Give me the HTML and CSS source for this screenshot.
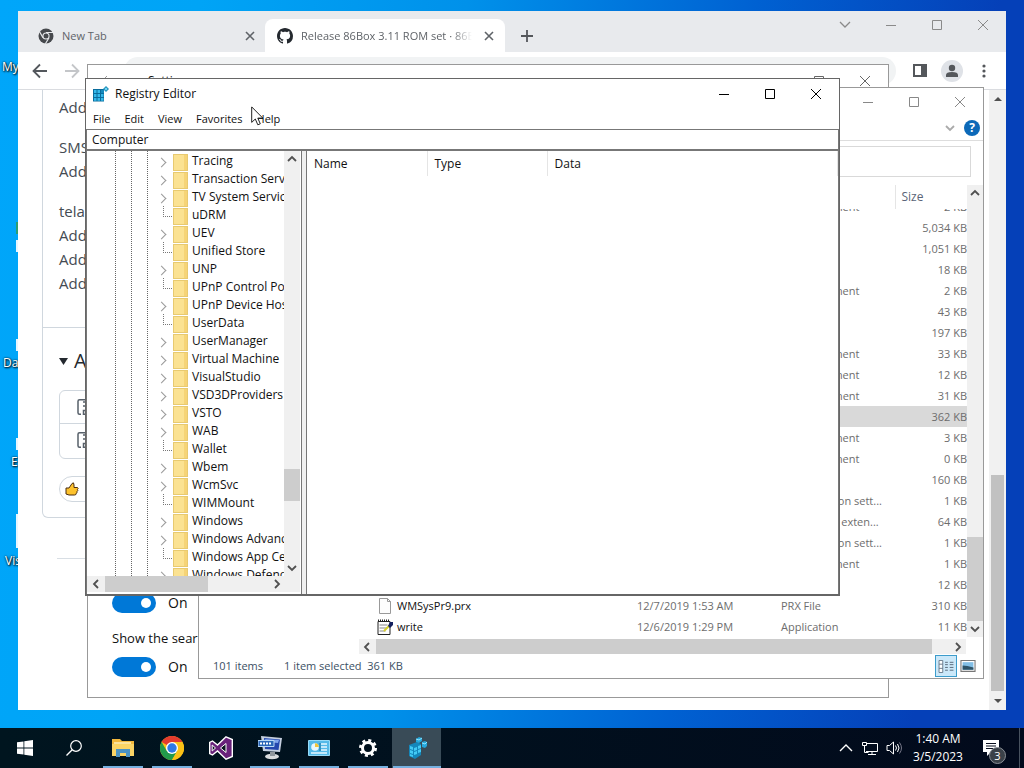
FILE: index.html
```html
<!DOCTYPE html>
<html lang="en">
<head>
<meta charset="utf-8">
<title>Desktop</title>
<link rel="stylesheet" href="styles.css">
</head>
<body>
<svg class="sprites" aria-hidden="true">
  <symbol id="i-min" viewBox="0 0 12 12"><path d="M1 6.500h10" stroke="currentColor"/></symbol>
  <symbol id="i-max" viewBox="0 0 12 12"><path d="M1.500 1.500h9v9h-9z" fill="none" stroke="currentColor"/></symbol>
  <symbol id="i-close" viewBox="0 0 12 12"><path d="M1 1l10 10M11 1L1 11" stroke="currentColor"/></symbol>
  <symbol id="i-down" viewBox="0 0 10 10"><path d="M1 3l4 4 4-4" fill="none" stroke="currentColor" stroke-width="1.800"/></symbol>
  <symbol id="i-up" viewBox="0 0 10 10"><path d="M1 7l4-4 4 4" fill="none" stroke="currentColor" stroke-width="1.800"/></symbol>
  <symbol id="i-left" viewBox="0 0 10 10"><path d="M7 1L3 5l4 4" fill="none" stroke="currentColor" stroke-width="1.800"/></symbol>
  <symbol id="i-right" viewBox="0 0 10 10"><path d="M3 1l4 4-4 4" fill="none" stroke="currentColor" stroke-width="1.800"/></symbol>
  <symbol id="i-zip" viewBox="0 0 12 16"><path d="M11 .8H2.500Q1 .8 1 2.300v11.400Q1 15.200 2.500 15.200H4M6 3h2M8 5h2M6 7h2M8 9h2M6.500 11.500h3.500v3.700H6.500z" fill="none" stroke="#57606a" stroke-width="1.500"/></symbol>
  <symbol id="i-reg" viewBox="0 0 16 16"><path d="M0 3h11v12.500H0z" fill="#0a6c9c"/><path d="M1 4h2.500v3H1zM4.500 4H7v3H4.500zM1 8h2.500v3H1zM4.500 8H7v3H4.500zM8 8h2.500v3H8zM1 12h2.500v2.700H1zM4.500 12H7v2.700H4.500zM8 12h2.500v2.700H8z" fill="#35b9ea"/><path d="M8 4h3v3H8z" fill="#1489bd"/><path d="M13 0l3 3-3 3-3-3z" fill="#1f8fba"/><path d="M13 1.500L14.500 3 13 4.500 11.500 3z" fill="#7adcf8"/></symbol>
</svg>

<main class="desktop">
  <div class="shortcuts">
    <span class="shortcut s-my">My</span>
    <span class="shortcut s-da">Da</span>
    <span class="shortcut s-e">E</span>
    <span class="shortcut s-vis">Vis</span>
    <i class="sliver v-green"></i><i class="sliver v-a"></i><i class="sliver v-b"></i><i class="sliver v-c"></i><i class="sliver v-d"></i>
  </div>

  <section class="window chrome" aria-label="Browser">
    <header class="tabstrip">
      <div class="tab">
        <svg class="favicon" viewBox="0 0 16 16"><circle cx="8" cy="8" r="7.500" fill="#46494d"/><path d="M8 4.500h7M5 9.700L1.600 3.700M11 9.700l-3.600 6" stroke="#e8eaed" stroke-width="1.200"/><circle cx="8" cy="8" r="3.600" fill="#e8eaed"/><circle cx="8" cy="8" r="2.500" fill="#46494d"/></svg>
        <span class="tab-title">New Tab</span>
        <button class="tab-close" aria-label="Close tab"><svg viewBox="0 0 12 12"><path d="M2 2l8 8M10 2l-8 8" stroke="currentColor" stroke-width="1.600"/></svg></button>
      </div>
      <div class="tab active">
        <svg class="favicon" viewBox="0 0 16 16"><path fill="#24292f" d="M8 0C3.580 0 0 3.580 0 8c0 3.540 2.290 6.530 5.470 7.590.4.070.55-.17.55-.38 0-.19-.01-.82-.01-1.490-2.010.37-2.530-.49-2.690-.94-.09-.23-.48-.94-.82-1.130-.28-.15-.68-.52-.01-.53.63-.01 1.080.58 1.230.82.72 1.210 1.870.87 2.330.66.070-.52.28-.87.51-1.070-1.780-.2-3.640-.89-3.640-3.950 0-.87.31-1.590.82-2.150-.08-.2-.36-1.020.08-2.120 0 0 .67-.21 2.200.82.64-.18 1.320-.27 2-.27s1.360.09 2 .27c1.530-1.040 2.200-.82 2.200-.82.44 1.100.16 1.920.08 2.120.51.56.82 1.270.82 2.150 0 3.070-1.870 3.750-3.650 3.950.29.25.54.73.54 1.480 0 1.070-.01 1.930-.01 2.200 0 .21.15.46.55.38A8.010 8.010 0 0 0 16 8c0-4.420-3.580-8-8-8z"/></svg>
        <span class="tab-title faded">Release 86Box 3.11 ROM set · 86Box</span>
        <button class="tab-close" aria-label="Close tab"><svg viewBox="0 0 12 12"><path d="M2 2l8 8M10 2l-8 8" stroke="currentColor" stroke-width="1.600"/></svg></button>
      </div>
      <button class="newtab" aria-label="New tab"><svg viewBox="0 0 12 12"><path d="M6 0v12M0 6h12" stroke="currentColor" stroke-width="1.800"/></svg></button>
      <div class="controls">
        <button aria-label="Search tabs"><svg viewBox="0 0 12 12"><path d="M1 3l5 5 5-5" fill="none" stroke="currentColor" stroke-width="1.300"/></svg></button>
        <button aria-label="Minimize"><svg><use href="#i-min"/></svg></button>
        <button aria-label="Maximize"><svg><use href="#i-max"/></svg></button>
        <button aria-label="Close"><svg><use href="#i-close"/></svg></button>
      </div>
    </header>
    <nav class="toolbar">
      <button aria-label="Back"><svg viewBox="0 0 16 16"><path d="M15 8H2M8 1.500L1.500 8 8 14.500" fill="none" stroke="#54585d" stroke-width="1.800"/></svg></button>
      <button aria-label="Forward"><svg viewBox="0 0 16 16"><path d="M1 8h13M8 1.500L14.500 8 8 14.500" fill="none" stroke="#c4c6c9" stroke-width="1.800"/></svg></button>
      <div class="omnibox"></div>
      <button aria-label="Side panel"><svg viewBox="0 0 16 16"><path d="M1 1h14v13H1z" fill="#54575b"/><path d="M3 3h6v9H3z" fill="#fff"/></svg></button>
      <button class="avatar" aria-label="Profile"><svg viewBox="0 0 16 16"><circle cx="8" cy="5" r="3.200" fill="#54575b"/><path d="M2 14v-2q0-3 6-3t6 3v2z" fill="#54575b"/></svg></button>
      <button class="menu" aria-label="Menu"><svg viewBox="0 0 16 16"><g fill="#54575b"><circle cx="8" cy="3" r="1.600"/><circle cx="8" cy="8" r="1.600"/><circle cx="8" cy="13" r="1.600"/></g></svg></button>
    </nav>
    <div class="page">
      <article class="release">
        <div class="release-body">
          <p>Add</p>
          <p>SMS<br>Add</p>
          <p>tela<br>Add<br>Add<br>Add</p>
        </div>
        <div class="release-assets">
          <h2><svg viewBox="0 0 10 10"><path d="M0 1h10L5 9z" fill="#24292f"/></svg>A</h2>
          <ul class="assets"><li><svg><use href="#i-zip"/></svg></li><li><svg><use href="#i-zip"/></svg></li></ul>
          <button class="reaction" aria-label="Thumbs up"><svg viewBox="0 0 14 14"><path d="M1 6h3l3-4.500Q9-.5 9 3v2.500h3.500q1.300 1-.1 2 1 1.200-.4 2 .6 1.300-.8 1.800.2 1.700-1.700 1.700H4L1 12z" fill="#fdc22d" stroke="#4a2d10" stroke-width="1"/></svg></button>
        </div>
      </article>
      <hr>
      <div class="page-scroll">
        <svg viewBox="0 0 8 8"><path d="M0 6h8L4 2z" fill="#505050"/></svg>
        <div class="page-track"><div class="page-thumb"></div></div>
        <svg viewBox="0 0 8 8"><path d="M0 2h8L4 6z" fill="#505050"/></svg>
      </div>
    </div>
  </section>

  <section class="window settings" aria-label="Settings">
    <header class="titlebar">
      <svg class="back" viewBox="0 0 16 16"><path d="M15 8H2M7 3L2 8l5 5" fill="none" stroke="#999"/></svg>
      <span>Settings</span>
      <div class="controls"><button aria-label="Minimize"></button><button aria-label="Maximize"><svg><use href="#i-max"/></svg></button><button aria-label="Close"><svg><use href="#i-close"/></svg></button></div>
    </header>
    <form class="options">
      <label class="toggle"><input type="checkbox" checked>On</label>
      <p>Show the sear</p>
      <label class="toggle"><input type="checkbox" checked>On</label>
    </form>
  </section>

  <section class="window explorer" aria-label="File Explorer">
    <header class="titlebar">
      <div class="controls"><button aria-label="Minimize"><svg><use href="#i-min"/></svg></button><button aria-label="Maximize"><svg><use href="#i-max"/></svg></button><button aria-label="Close"><svg><use href="#i-close"/></svg></button></div>
    </header>
    <div class="ribbon">
      <button aria-label="Expand ribbon"><svg><use href="#i-down"/></svg></button>
      <button class="help" aria-label="Help">?</button>
    </div>
    <div class="address"><input class="search" type="text" aria-label="Search"></div>
    <div class="listing">
      <div class="list-main">
        <div class="list-clip">
          <table class="files">
            <colgroup><col class="c-name"><col class="c-date"><col class="c-type"><col></colgroup>
            <thead><tr><th></th><th></th><th></th><th>Size</th></tr></thead>
          </table>
          <div class="rows">
            <table class="files">
              <colgroup><col class="c-name"><col class="c-date"><col class="c-type"><col></colgroup>
              <tbody>
                <tr><td></td><td></td><td>Text Document</td><td>2 KB</td></tr>
                <tr><td></td><td></td><td>Application</td><td>5,034 KB</td></tr>
                <tr><td></td><td></td><td>Application</td><td>1,051 KB</td></tr>
                <tr><td></td><td></td><td>Application</td><td>18 KB</td></tr>
                <tr><td></td><td></td><td>Text Document</td><td>2 KB</td></tr>
                <tr><td></td><td></td><td></td><td>43 KB</td></tr>
                <tr><td></td><td></td><td>Application</td><td>197 KB</td></tr>
                <tr><td></td><td></td><td>Text Document</td><td>33 KB</td></tr>
                <tr><td></td><td></td><td>Text Document</td><td>12 KB</td></tr>
                <tr><td></td><td></td><td>XML Document</td><td>31 KB</td></tr>
                <tr class="selected"><td></td><td></td><td>Application</td><td>362 KB</td></tr>
                <tr><td></td><td></td><td>Text Document</td><td>3 KB</td></tr>
                <tr><td></td><td></td><td>Text Document</td><td>0 KB</td></tr>
                <tr><td></td><td></td><td>Application</td><td>160 KB</td></tr>
                <tr><td></td><td></td><td>Configuration sett...</td><td>1 KB</td></tr>
                <tr><td></td><td></td><td>Application exten...</td><td>64 KB</td></tr>
                <tr><td></td><td></td><td>Configuration sett...</td><td>1 KB</td></tr>
                <tr><td></td><td></td><td>Text Document</td><td>1 KB</td></tr>
                <tr><td></td><td></td><td>Application</td><td>12 KB</td></tr>
                <tr><td class="fname"><svg viewBox="0 0 16 16"><path d="M2.500.500h8l3 3v12h-11z" fill="#fdfdfd" stroke="#999"/><path d="M10.500.500v3h3" fill="none" stroke="#999"/></svg>WMSysPr9.prx</td><td>12/7/2019 1:53 AM</td><td>PRX File</td><td>310 KB</td></tr>
                <tr><td class="fname"><svg viewBox="0 0 16 16"><path d="M1 2.500h12v13H1z" fill="#fff" stroke="#222"/><path d="M1 1.500h12" stroke="#222" stroke-width="2" stroke-dasharray="1 1"/><path d="M2.500 6h8M2.500 9h8M2.500 12h6" stroke="#888"/><path d="M7 12l6-6" stroke="#d8d12a" stroke-width="2"/><path d="M11 7l2-4h3v3l-3 3z" fill="#14205e"/></svg>write</td><td>12/6/2019 1:29 PM</td><td>Application</td><td>11 KB</td></tr>
              </tbody>
            </table>
          </div>
        </div>
        <div class="vscroll"><svg><use href="#i-up"/></svg><div class="track end"><div class="thumb tall"></div></div><svg><use href="#i-down"/></svg></div>
      </div>
      <div class="hscroll"><svg><use href="#i-left"/></svg><div class="track"><div class="thumb wide"></div></div><svg><use href="#i-right"/></svg></div>
    </div>
    <footer class="status">
      <span>101 items</span><span>1 item selected&nbsp; 361 KB</span>
      <div class="views">
        <button class="on" aria-label="Details"><svg viewBox="0 0 16 14"><path d="M.5.500h4v13h-4zM.5 4.500h4M.5 9h4" fill="#fff" stroke="#678"/><path d="M7 2.500h3M12 2.500h4M7 5h3M12 5h4M7 8h3M12 8h4M7 11h3M12 11h4" stroke="#567"/></svg></button>
        <button aria-label="Large icons"><svg viewBox="0 0 14 12"><path d="M.5.500h13v10H.500z" fill="#fff" stroke="#777"/><path d="M2 2h10v7H2z" fill="#82bfe6"/><path d="M2 9V5q4 0 10 2v2z" fill="#2d5368"/></svg></button>
      </div>
    </footer>
  </section>

  <section class="window regedit" aria-label="Registry Editor">
    <header class="titlebar">
      <svg class="app"><use href="#i-reg"/></svg>
      <h1>Registry Editor</h1>
      <div class="controls"><button aria-label="Minimize"><svg><use href="#i-min"/></svg></button><button aria-label="Maximize"><svg><use href="#i-max"/></svg></button><button aria-label="Close"><svg><use href="#i-close"/></svg></button></div>
    </header>
    <nav class="menubar"><button>File</button><button>Edit</button><button>View</button><button>Favorites</button><button>Help</button></nav>
    <input class="path" type="text" value="Computer" aria-label="Path">
    <div class="panes">
      <div class="tree-pane">
        <div class="tree-main">
          <ul class="tree">
            <li class="x">Tracing</li><li class="x">Transaction Server</li><li class="x">TV System Services</li><li>uDRM</li><li class="x">UEV</li><li>Unified Store</li><li class="x">UNP</li><li>UPnP Control Point</li><li class="x">UPnP Device Host</li><li>UserData</li><li class="x">UserManager</li><li class="x">Virtual Machine</li><li class="x">VisualStudio</li><li class="x">VSD3DProviders</li><li class="x">VSTO</li><li class="x">WAB</li><li>Wallet</li><li class="x">Wbem</li><li class="x">WcmSvc</li><li>WIMMount</li><li class="x">Windows</li><li class="x">Windows Advanced</li><li>Windows App Certification</li><li class="x">Windows Defender</li>
          </ul>
          <div class="vscroll"><svg><use href="#i-up"/></svg><div class="track near-end"><div class="thumb short"></div></div><svg><use href="#i-down"/></svg></div>
        </div>
        <div class="hscroll"><svg><use href="#i-left"/></svg><div class="track"><div class="thumb narrow"></div></div><svg><use href="#i-right"/></svg></div>
      </div>
      <div class="value-pane">
        <table class="values"><thead><tr><th class="v">Name</th><th class="v">Type</th><th>Data</th></tr></thead></table>
      </div>
    </div>
  </section>

  <svg class="cursor" viewBox="0 0 14 20"><path d="M.7.900v15.500l3.600-3.400 2.500 5.800 2.500-1-2.500-5.700h5z" fill="#fff" stroke="#222"/></svg>
</main>

<footer class="taskbar">
  <button aria-label="Start"><svg viewBox="0 0 16 16"><path fill="#fff" d="M0 2.300l6.500-.9v6.200H0zM7.300 1.300L16 0v7.600H7.300zM0 8.400h6.500v6.200L0 13.700zM7.300 8.400H16V16l-8.700-1.300z"/></svg></button>
  <button aria-label="Search"><svg viewBox="0 0 16 16"><circle cx="10" cy="6" r="5.300" fill="none" stroke="#fff" stroke-width="1.200"/><path d="M6.200 9.800L.5 15.500" stroke="#fff" stroke-width="1.300"/></svg></button>
  <button class="running" aria-label="File Explorer"><svg class="lg" viewBox="0 0 24 24"><path d="M1 3h8l2 2h12v15H1z" fill="#f2b83d"/><path d="M3 6h17v4H3z" fill="#fbe39c"/><path d="M1 8h22v12H1z" fill="#fbd465"/><path d="M5 13h14v8h-4v-4H9v4H5z" fill="#4c93c4"/></svg></button>
  <button class="running" aria-label="Chrome"><svg class="lg" viewBox="0 0 24 24"><circle cx="12" cy="12" r="12" fill="#fbc116"/><path d="M12 12L1.600 6A12 12 0 0 1 22.400 6H12z" fill="#e33b2e"/><path d="M12 12L6.800 15 1.600 6A12 12 0 0 0 12 24l5.200-9z" fill="#229a4b"/><path d="M12 6h10.400A12 12 0 0 1 12 24l5.200-9z" fill="#fbc116"/><circle cx="12" cy="12" r="6" fill="#fff"/><circle cx="12" cy="12" r="4.700" fill="#2f79e6"/></svg></button>
  <button aria-label="Visual Studio"><svg class="lg" viewBox="0 0 24 24"><path d="M17 .8L23.300 3.500v17L17 23.200 8.500 15 3.500 19 .7 17.500v-11L3.500 5l5 4z" fill="#68217a" stroke="#fff" stroke-width="1.400"/><path d="M17 7.500v9L11.500 12zM3.200 9v6L6.500 12z" fill="#0a1720" stroke="#fff"/></svg></button>
  <button class="running" aria-label="Remote computer"><svg class="lg" viewBox="0 0 24 24"><ellipse cx="14" cy="20.500" rx="7" ry="2.800" fill="#d9dbdd"/><path d="M12 16h5v4h-5z" fill="#8f969c"/><path d="M3 0l21 2-2 14-17-1z" fill="#c5cfdf"/><path d="M6 2l16 1.500L20.500 14 7 13z" fill="#2447ae"/><path d="M7 3l14 1-1 3-12-1z" fill="#7fa4ea"/><path d="M0 4.500h16v6H0z" fill="#2b67b8" stroke="#b9d8f5"/><path d="M2 7.500h12" stroke="#fff" stroke-width="2" stroke-dasharray="2 1"/></svg></button>
  <button class="running" aria-label="Control Panel"><svg class="lg" viewBox="0 0 24 24"><path d="M1.500 4.500h21v15h-21z" fill="#55b9e8" stroke="#96daf7"/><circle cx="8" cy="11" r="3.800" fill="#e9f8ff"/><path d="M8 11V7.200A3.800 3.800 0 0 1 11.800 11z" fill="#f6c437"/><path d="M14 8h6M14 11h6M14 14h6M4 17h16" stroke="#e6f8ff" stroke-width="1.500"/><path d="M13 7v8" stroke="#176ea0"/></svg></button>
  <button class="running" aria-label="Settings"><svg class="lg" viewBox="0 0 24 24"><circle cx="12" cy="12" r="5.500" fill="none" stroke="#fff" stroke-width="3"/><circle cx="12" cy="12" r="7.500" fill="none" stroke="#fff" stroke-width="3" stroke-dasharray="2.945 2.945"/></svg></button>
  <button class="running current" aria-label="Registry Editor"><svg class="lg" viewBox="0 0 24 24"><path d="M4 9l8-3 4 2v11l-6 4-6-3z" fill="#1487bb"/><path d="M5 10l3 1v3l-3-1zM5 14l3 1v3l-3-1zM5 18l3 1v2l-3-1zM9 12l3-1v3l-3 1zM9 16l3-1v3l-3 1zM13 10l3-1v3l-3 1zM13 14l3-1v3l-3 1z" fill="#43cbf5"/><path d="M11 3l3-2 3 1v3l-3 2-3-1zM17 6l3-1 2 1v4l-2 2-3-1z" fill="#25a7db"/><path d="M11 3l3 1 3-2M17 7l3 1 2-2" stroke="#8ce4ff" fill="none"/></svg></button>
  <div class="tray">
    <button aria-label="Hidden icons"><svg viewBox="0 0 16 16"><path d="M2 11l6-6 6 6" fill="none" stroke="#fff" stroke-width="1.400"/></svg></button>
    <button aria-label="Network"><svg viewBox="0 0 16 16"><path d="M4.500 3.500h11v8H4M10 11.500V14M6 14.500h8M.5 2.500h4v3h-4zM2.500 5.500v7h4" fill="none" stroke="#fff"/></svg></button>
    <button aria-label="Volume"><svg viewBox="0 0 16 16"><path d="M1 5.500h2.500l4-3.500v12l-4-3.500H1z" fill="none" stroke="#fff"/><path d="M9.500 5.500q2 2.500 0 5M11.500 4q3 4 0 8" fill="none" stroke="#fff"/><path d="M13.500 2.500q4 5.500 0 11" fill="none" stroke="#778"/></svg></button>
    <div class="clock"><time>1:40 AM</time><time>3/5/2023</time></div>
    <button class="notify" aria-label="Notifications"><svg viewBox="0 0 16 16"><path d="M0 0h16v12H8l-4 4v-4H0z" fill="#fff"/><path d="M3 3.500h10M3 6h10M3 8.500h7" stroke="#0a1020" stroke-width="1.200"/></svg><span class="badge">3</span></button>
  </div>
</footer>
</body>
</html>
```
FILE: styles.css
```css
* { box-sizing: border-box; }
body {
  margin: 0;
  height: 100vh;
  display: flex;
  flex-direction: column;
  overflow: hidden;
  font: 12px/18px "Open Sans", "Noto Sans", sans-serif;
  color: #111;
}
button, input { font: inherit; color: inherit; border: 0; padding: 0; background: none; }
ul, p, h1, h2 { margin: 0; padding: 0; list-style: none; font: inherit; }
svg { display: block; flex: none; }
.sprites { position: absolute; width: 0; height: 0; }

.desktop {
  flex: 1;
  position: relative;
  overflow: hidden;
  background: linear-gradient(97deg, #00a6fa 0%, #00a4f6 18%, #0091ea 42%, #0061d2 68%, #0540b8 90%);
}
.shortcut { position: absolute; color: #fff; text-shadow: 1px 1px 2px #000, 0 0 2px #000; }
.s-my { left: 2px; top: 58px; }
.s-da { left: 3px; top: 354px; }
.s-e { left: 11px; top: 453px; }
.s-vis { left: 5px; top: 552px; }
.sliver { position: absolute; left: 16px; width: 2px; height: 12px; background: #e8f6ff; }
.v-green { top: 222px; background: #2c9d72; }
.v-a { top: 240px; }
.v-b { top: 339px; }
.v-c { top: 438px; }
.v-d { top: 514px; height: 34px; }

.window { position: absolute; background: #fff; display: flex; flex-direction: column; overflow: hidden; }
.controls { display: flex; margin-left: auto; }
.controls button { width: 46px; height: 28px; display: grid; place-items: center; }
.controls svg { width: 12px; height: 12px; }
.titlebar { display: flex; align-items: center; flex: none; }

/* browser */
.chrome { inset: 11px 18px 18px 18px; }
.tabstrip { display: flex; height: 41px; flex: none; background: #e8eaed; }
.tab { display: flex; align-items: center; gap: 8px; width: 247px; padding: 8px 6px 0 20px; font-size: 11px; color: #5f6368; }
.tab.active { width: 240px; margin-top: 8px; padding: 0 7px 0 12px; background: #fff; border-radius: 8px 8px 0 0; }
.favicon { width: 16px; height: 16px; }
.tab-title { flex: 1; overflow: hidden; white-space: nowrap; }
.faded { mask-image: linear-gradient(90deg, #000 88%, transparent); }
.tab-close { width: 18px; height: 18px; display: grid; place-items: center; }
.tab-close svg { width: 12px; height: 12px; }
.newtab { width: 44px; margin-top: 8px; display: grid; place-items: center; color: #54575b; }
.newtab svg { width: 12px; height: 12px; }
.chrome .controls { color: #8a8a8a; }
.toolbar { display: flex; align-items: center; height: 38px; flex: none; padding: 0 6px; border-bottom: 1px solid #dadce0; }
.toolbar button { width: 32px; height: 28px; display: grid; place-items: center; flex: none; }
.toolbar button svg { width: 16px; height: 16px; }
.omnibox { flex: 1; height: 28px; margin: 0 8px 0 36px; border-radius: 14px; background: #f1f3f4; }
.toolbar .avatar { width: 22px; height: 22px; margin: 0 5px; border-radius: 11px; background: #dfe2e7; }
.page { position: relative; flex: 1; padding: 0 40px 0 24px; }
.release { border: 1px solid #d0d7de; border-top: 0; border-radius: 0 0 6px 6px; }
.release-body { padding: 5px 16px 32px; border-bottom: 1px solid #d0d7de; font-size: 15px; line-height: 24px; color: #444b52; }
.release-body p { margin-bottom: 16px; }
.release-body p:last-child { margin-bottom: 0; }
.release-assets { padding: 18px 16px 15px; }
.release-assets h2 { display: flex; align-items: center; gap: 6px; font-size: 20px; line-height: 30px; color: #24292f; }
.release-assets h2 svg { width: 9px; height: 9px; }
.assets { margin: 14px 0 17px; border: 1px solid #d0d7de; border-radius: 6px; }
.assets li { height: 32px; padding: 8px 17px; }
.assets li + li { border-top: 1px solid #d0d7de; height: 35px; }
.assets svg { width: 12px; height: 16px; }
.reaction { display: flex; align-items: center; width: 60px; height: 26px; padding: 0 5px; border: 1px solid #d0d7de; border-radius: 13px; }
.reaction svg { width: 14px; height: 14px; }
.page hr { margin: 40px 0 0 15px; border: 0; border-top: 1px solid #d8dee4; }
.page-scroll { position: absolute; top: 0; right: 0; bottom: 0; width: 17px; padding: 5px 0; display: flex; flex-direction: column; align-items: center; background: #f1f1f1; }
.page-scroll svg { width: 8px; height: 8px; }
.page-track { flex: 1; width: 13px; margin: 4px 0 6px; display: flex; align-items: flex-end; }
.page-thumb { width: 100%; height: 37%; background: #c1c1c1; }

/* settings */
.settings { inset: 64px 135px 30px 87px; border: 1px solid #999; justify-content: space-between; }
.settings .titlebar { height: 32px; padding-left: 12px; gap: 32px; }
.settings .back { width: 16px; height: 16px; }
.settings .controls { color: #666; }
.options { padding: 0 24px 16px; font-size: 14px; line-height: 20px; }
.options p { margin: 11px 0 5px; font-size: 13px; }
.toggle { display: flex; align-items: center; gap: 12px; height: 28px; }
.toggle input { appearance: none; width: 44px; height: 20px; margin: 0; padding: 5px; border-radius: 10px; background: #0078d7; }
.toggle input::after { content: ""; display: block; width: 10px; height: 10px; margin-left: auto; border-radius: 5px; background: #fff; }

/* file explorer */
.explorer { inset: 87px 40px 49px 198px; border: 1px solid #999; font-size: 11px; color: #6d6d6d; }
.explorer .titlebar { height: 27px; }
.explorer .controls { color: #888; }
.ribbon { display: flex; justify-content: flex-end; align-items: center; gap: 9px; height: 26px; flex: none; padding: 0 3px; border-bottom: 1px solid #ddd; }
.ribbon svg { width: 10px; height: 10px; color: #aaa; }
.help { width: 16px; height: 16px; border-radius: 8px; background: #0c69b8; color: #fff; font-size: 12px; font-weight: bold; line-height: 16px; }
.address { display: flex; justify-content: flex-end; padding: 5px 12px 8px; flex: none; }
.search { width: 136px; height: 31px; border: 1px solid #d9d9d9; }
.listing { flex: 1; min-height: 0; margin-left: 160px; display: flex; flex-direction: column; }
.list-main { flex: 1; min-height: 0; display: flex; }
.list-clip { flex: 1; min-width: 0; display: flex; flex-direction: column; }
.files { width: 100%; table-layout: fixed; border-collapse: collapse; }
.c-name { width: 278px; }
.c-date { width: 144px; }
.c-type { width: 114px; }
.files th { height: 24px; padding: 0 0 0 6px; border-right: 1px solid #e5e5e5; font-size: 12px; font-weight: normal; text-align: left; color: #5a6577; }
.files th:last-child { border: 0; }
.rows { flex: 1; min-height: 0; display: flex; flex-direction: column; justify-content: flex-end; overflow: hidden; }
.files td { height: 21px; padding: 0; white-space: nowrap; }
.files td:last-child { text-align: right; }
.files .fname { display: flex; align-items: center; gap: 4px; padding-left: 18px; color: #111; }
.fname svg { width: 16px; height: 16px; }
.selected { background: #d9d9d9; }
.vscroll { width: 16px; flex: none; padding: 3px 0; display: flex; flex-direction: column; align-items: center; background: #f0f0f0; }
.vscroll svg, .hscroll svg { width: 10px; height: 10px; color: #505050; }
.track { flex: 1; display: flex; }
.vscroll .track { width: 100%; margin: 3px 0; flex-direction: column; }
.track.end { justify-content: flex-end; }
.track.near-end { justify-content: flex-end; padding-bottom: 59px; }
.thumb { background: #cdcdcd; }
.tall { height: 20%; }
.short { height: 32px; }
.hscroll { height: 15px; flex: none; display: flex; align-items: center; padding: 0 3px; background: #f0f0f0; }
.hscroll .track { height: 100%; margin: 0 4px; }
.listing .hscroll { margin: 2px 17px 0 0; }
.wide { width: 97%; }
.narrow { width: 63%; }
.status { display: flex; align-items: center; gap: 21px; height: 24px; flex: none; padding: 0 4px 0 14px; color: #3c5064; }
.views { display: flex; margin-left: auto; }
.views button { width: 22px; height: 22px; display: grid; place-items: center; }
.views .on { background: #cbe8f9; border: 1px solid #3c9ccb; }
.views svg { width: 16px; height: 13px; }

/* registry editor */
.regedit { inset: 78px 184px 132px 85px; border: 1px solid #666; border-bottom-width: 2px; }
.regedit .titlebar { height: 29px; padding-left: 7px; gap: 6px; }
.app { width: 16px; height: 16px; }
.regedit .controls { color: #000; }
.menubar { display: flex; flex: none; height: 21px; font-size: 11px; }
.menubar button { padding: 0 7px; }
.path { flex: none; width: 100%; height: 22px; padding: 0 5px; border: 1px solid #777; border-width: 1px 1px 2px; }
.panes { flex: 1; min-height: 0; display: flex; gap: 4px; background: #f0f0f0; border-right: 1px solid #777; }
.tree-pane { width: 216px; flex: none; border: 1px solid #777; border-width: 0 1px; display: flex; flex-direction: column; background: #fff; padding-right: 1px; }
.tree-main { flex: 1; min-height: 0; display: flex; }
.tree {
  flex: 1;
  min-width: 0;
  overflow: hidden;
  padding: 1px 0 0 28px;
  background: repeating-linear-gradient(180deg, transparent 0 1px, #fff 1px 2px),
    linear-gradient(90deg, transparent 28px, #666 28px 29px, transparent 29px 44px, #666 44px 45px, transparent 45px 60px, #666 60px 61px, transparent 61px);
}
.tree li { position: relative; height: 18px; padding-left: 77px; white-space: nowrap; }
.tree li::before { content: ""; position: absolute; left: 48px; top: 0; width: 8px; height: 10px; border: dotted #777; border-width: 0 0 1px 1px; }
.tree li::after { content: ""; position: absolute; left: 58px; top: 2px; width: 13px; height: 15px; border: 1px solid #e8ca70; background: linear-gradient(90deg, #fbe292 75%, #f6d477 75%); }
.tree li.x::before { left: 43px; top: 7px; width: 6px; height: 6px; border: solid #999; border-width: 1px 1px 0 0; transform: rotate(45deg); }
.tree-pane .hscroll { height: 16px; padding: 0 18px 0 4px; margin-bottom: 2px; }
.value-pane { flex: 1; border-left: 1px solid #777; background: #fff; }
.values { width: 100%; border-collapse: collapse; table-layout: fixed; }
.values th { height: 25px; padding: 0 7px; text-align: left; font-weight: normal; border-right: 1px solid #e5e5e5; }
.values .v { width: 120px; }
.cursor { position: absolute; left: 251px; top: 106px; width: 14px; height: 20px; }

/* taskbar */
.taskbar { height: 40px; flex: none; display: flex; color: #fff; background: linear-gradient(90deg, #00151f, #020a1c); }
.taskbar > button { width: 49px; border-bottom: 2px solid transparent; padding-top: 1px; display: grid; place-items: center; }
.taskbar svg { width: 16px; height: 16px; }
.taskbar .lg { width: 24px; height: 24px; }
.taskbar .running { background: linear-gradient(#76b0e0, #76b0e0) no-repeat center 38px/40px 2px border-box; }
.taskbar .current { background: linear-gradient(#76b0e0, #76b0e0) no-repeat center 38px/48px 2px border-box, #394b57; }
.tray { margin-left: auto; display: flex; align-items: center; padding-right: 4px; }
.tray button { width: 24px; height: 40px; display: grid; place-items: center; }
.clock { width: 64px; display: flex; flex-direction: column; align-items: center; }
.tray .notify { position: relative; width: 50px; padding-right: 8px; border-right: 1px solid #48525f; }
.badge { position: absolute; right: 13px; bottom: 4px; width: 17px; height: 17px; border: 1px solid #8a8f96; border-radius: 9px; background: #3a4149; font-size: 11px; line-height: 15px; }
```
